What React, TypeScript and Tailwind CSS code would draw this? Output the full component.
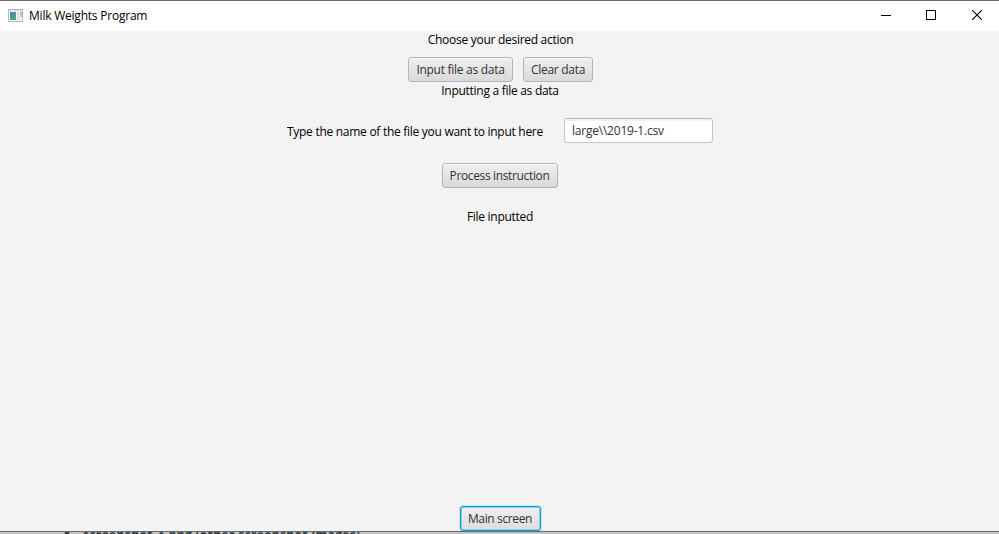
import type { ReactNode } from "react";

function Button({ children, className, focused = false }: { children: ReactNode; className: string; focused?: boolean }) {
  return (
    <button
      className={`flex h-[25px] items-center justify-center whitespace-nowrap rounded-[3px] border bg-linear-to-b text-[#333] ${
        focused
          ? "border-[#039ed3] from-[#f0f0f0] to-[#dddddd] shadow-[0_0_0_1px_#c3e6f1,inset_0_0_0_1px_#8fcfe4]"
          : "border-[#b5b5b5] from-[#efefef] to-[#d9d9d9] shadow-[inset_0_1px_0_#fafafa]"
      } ${className}`}
    >
      {children}
    </button>
  );
}

function AppIcon() {
  return (
    <svg width="16" height="14" viewBox="0 0 16 14" shapeRendering="crispEdges">
      <defs>
        <linearGradient id="pane" x1="0" y1="0" x2="1" y2="1">
          <stop offset="0" stopColor="#4a7fa5" />
          <stop offset="1" stopColor="#4fae86" />
        </linearGradient>
      </defs>
      <rect x="0.5" y="0.5" width="14" height="12" fill="#f4f4f4" stroke="#b4b9be" />
      <rect x="1" y="1" width="13" height="1" fill="#d5d9dd" />
      <rect x="2" y="3" width="6" height="8" fill="url(#pane)" />
      <rect x="9" y="3" width="2" height="8" fill="#dedede" />
      <rect x="12" y="3" width="2" height="5" fill="#a8d4c4" />
      <rect x="12" y="3" width="2" height="2" fill="#9bb9e0" />
    </svg>
  );
}

export default function App() {
  return (
    <div className="flex h-[534px] w-[999px] flex-col overflow-hidden bg-[#c8c8c8] font-['Open_Sans','Noto_Sans',sans-serif] text-[12px] leading-4 tracking-[-0.28px] text-black">
      <header className="flex h-[31px] shrink-0 items-center border-t border-[#6b6b6b] bg-white pl-2 tracking-[-0.22px]">
        <AppIcon />
        <span className="ml-[5px] whitespace-nowrap">Milk Weights Program</span>
        <svg className="ml-auto" width="126" height="30" viewBox="873 0 126 30" fill="none" stroke="#000">
          <path d="M881 14.5H891" shapeRendering="crispEdges" />
          <rect x="926.5" y="9.5" width="9" height="9" shapeRendering="crispEdges" />
          <path d="M972.2 9.2L981.8 18.8M981.8 9.2L972.2 18.8" strokeWidth="1.1" />
        </svg>
      </header>
      <main className="flex h-[500px] shrink-0 flex-col items-center bg-[#f3f3f3] pt-px whitespace-nowrap">
        <p className="pl-[2px]">Choose your desired action</p>
        <div className="mt-[9px] flex gap-2.5 pl-px">
          <Button className="w-[105px] pl-px">Input file as data</Button>
          <Button className="w-[70px] pl-px">Clear data</Button>
        </div>
        <p className="mt-px pl-px">Inputting a file as data</p>
        <div className="mt-[19px] flex h-[25px] items-center pl-px">
          <label className="w-[277px] pt-[2px]">Type the name of the file you want to input here</label>
          <input
            defaultValue={"large\\\\2019-1.csv"}
            className="h-[25px] w-[149px] rounded-[3px] border border-[#c5c5c5] border-t-[#b5b5b5] bg-white px-[7px] tracking-[-0.22px] text-[#333] shadow-[inset_0_2px_1px_#f0f0f0] outline-none"
          />
        </div>
        <Button className="mt-5 w-[116px] tracking-[-0.36px]">Process instruction</Button>
        <p className="mt-[21px] pl-px">File inputted</p>
        <Button focused className="mt-auto ml-px w-[81px] tracking-[-0.36px]">Main screen</Button>
      </main>
      <footer className="h-[3px] shrink-0 overflow-hidden border-t border-[#6b6b6b] bg-[#c4c4c4] text-[#303840]">
        <p className="-mt-[5px] pl-[64px] font-bold tracking-[0.36px] whitespace-nowrap">
          <span className="inline-block w-[19px] text-[16px] leading-3">•</span>screenshot_*.png [other screenshot images]
        </p>
      </footer>
    </div>
  );
}
